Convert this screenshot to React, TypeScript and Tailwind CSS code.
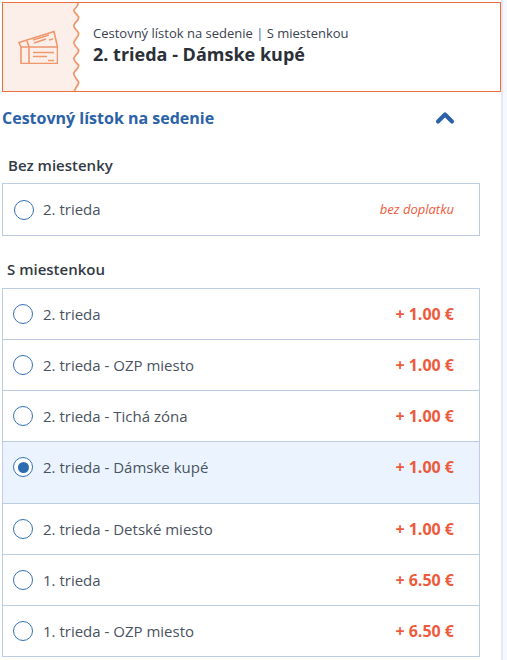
import { ChevronUp } from 'lucide-react'

const seatRows = [
  { label: '2. trieda', price: '+ 1.00 €' },
  { label: '2. trieda - OZP miesto', price: '+ 1.00 €' },
  { label: '2. trieda - Tichá zóna', price: '+ 1.00 €' },
  { label: '2. trieda - Dámske kupé', price: '+ 1.00 €', selected: true },
  { label: '2. trieda - Detské miesto', price: '+ 1.00 €' },
  { label: '1. trieda', price: '+ 6.50 €' },
  { label: '1. trieda - OZP miesto', price: '+ 6.50 €' },
]

const WAVE =
  'M5.5 0 C7.5 2 4 4 2 7 C1 9 5 11 6.5 14 C7.5 17 3 19 2 22 C1 25 5 27 6.5 30 C7.5 33 3 36 2 39 C1 42 5 44 6.5 47 C7.5 50 3 52 2 55 C1 58 5 60 6.5 62 C7.5 65 3 67 2 70 C1 73 5 76 6.5 79 C7.5 82 3 84 2.5 88'

function Radio({ checked }: { checked?: boolean }) {
  return (
    <span className="w-5 h-5 shrink-0 rounded-full border border-[#3572b8] bg-white flex items-center justify-center">
      {checked && <span className="w-[11px] h-[11px] rounded-full bg-[#2b6cb0]" />}
    </span>
  )
}

function TicketIcon() {
  return (
    <svg width="40" height="34" viewBox="0 0 40 34" fill="none" stroke="#f0976c" strokeWidth="1.6">
      <path d="M3 17 L1 12.5 L36 1.5 L39.5 17" />
      <path d="M9 11 L11 17 M15 10 L31 5 M16 13 L28 9 M31 10 L35 9" />
      <path d="M3 17 H39.5 V33.5 H3 Z" />
      <path d="M11 17 V33.5 M15 22.5 H36 M15 26.5 H29 M30 30.5 H36" />
    </svg>
  )
}

export default function App() {
  return (
    <div className="w-[507px] h-[660px] overflow-hidden bg-[#f5f9ff] font-['Open_Sans',sans-serif] text-[#333a45]">
      <div className="w-[503px] h-full bg-white pl-[2px] pt-[2px] border-r-2 border-[#e6e8ee]">
        {/* Header */}
        <div className="w-[499px] h-[90px] border border-[#e9703a] flex items-stretch">
          <div className="w-[69px] bg-[#fcefea] flex items-center justify-center pb-[1px]">
            <TicketIcon />
          </div>
          <svg width="9" height="88" viewBox="0 0 9 88" className="shrink-0">
            <path d={`${WAVE} H0 V0 Z`} fill="#fcefea" />
            <path d={WAVE} fill="none" stroke="#f0976c" strokeWidth="1.8" />
          </svg>
          <div className="pl-[12px] pt-[22px]">
            <div className="text-[13px] leading-[17px] text-[#3a4250]">
              Cestovný lístok na sedenie <span className="text-[#2b6cb0]">|</span> S miestenkou
            </div>
            <div className="text-[18px] leading-[24px] font-bold text-[#2a2f38]">2. trieda - Dámske kupé</div>
          </div>
        </div>

        {/* Section title */}
        <div className="w-[478px] h-[50px] flex items-center justify-between pr-[21px] pt-[1px]">
          <span className="text-[16px] font-bold text-[#2b62a8]">Cestovný lístok na sedenie</span>
          <ChevronUp className="w-7 h-7 text-[#2b62a8]" strokeWidth={3.5} />
        </div>

        <div className="pl-[6px] pt-[13px] text-[15px] leading-[20px] font-semibold">Bez miestenky</div>
        <div className="mt-[8px] w-[478px] h-[53px] border border-[#bccce2] flex items-center justify-between pl-[11px] pr-[25px]">
          <div className="flex items-center gap-[9px] text-[15px] text-[#4a5361]">
            <Radio />
            <span>2. trieda</span>
          </div>
          <span className="text-[13px] italic text-[#ee5a3c]">bez doplatku</span>
        </div>

        <div className="pl-[5px] pt-[23px] text-[15px] leading-[20px] font-semibold">S miestenkou</div>
        <div className="mt-[9px] w-[478px] border border-[#bccce2] border-b-0">
          {seatRows.map((row) => (
            <div
              key={row.label}
              className={
                row.selected
                  ? 'h-[62px] pt-[14px] bg-[#ebf4fe] border-b border-[#bccce2] flex items-start justify-between pl-[10px] pr-[25px]'
                  : 'h-[51px] border-b border-[#bccce2] flex items-center justify-between pl-[10px] pr-[25px]'
              }
            >
              <div className="flex items-center gap-[10px] text-[15px] text-[#4a5361]">
                <Radio checked={row.selected} />
                <span>{row.label}</span>
              </div>
              <span className="text-[16px] leading-[22px] font-bold text-[#ee5a3c]">{row.price}</span>
            </div>
          ))}
        </div>
      </div>
    </div>
  )
}
